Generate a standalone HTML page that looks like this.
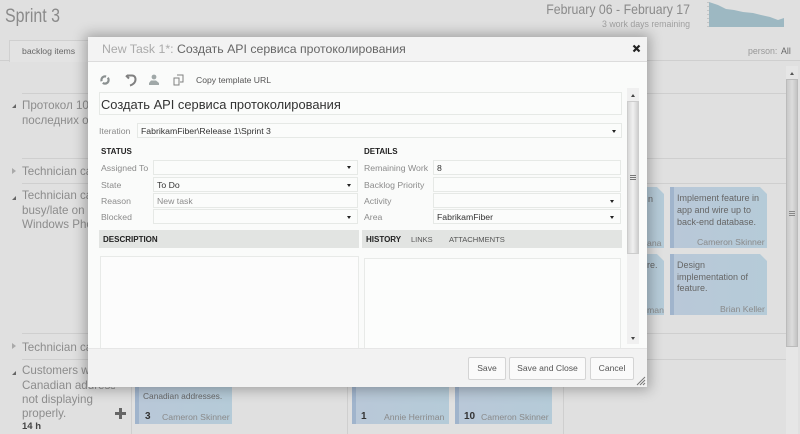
<!DOCTYPE html>
<html>
<head>
<meta charset="utf-8">
<style>
html,body{margin:0;padding:0;width:800px;height:434px;overflow:hidden;background:#e0e0e0}
body{font-family:"Liberation Sans","DejaVu Sans",sans-serif;position:relative}
div,span{position:absolute;white-space:nowrap;box-sizing:border-box}
#page{left:0;top:0;width:800px;height:434px;filter:blur(.35px);overflow:hidden}
.hl{background:#cfcfcf;height:1px}
.vl{background:#cfcfcf;width:1px}
.bt{color:#8c8c8c;font-size:11.6px;line-height:15px}
.card{background:linear-gradient(90deg,#b9c8d8,#b5cbd8);border-left:4px solid #a0b4cc;width:97px}
.ct{color:#666;font-size:9px;line-height:12px}
.cn{color:#8a8a8a;font-size:8.7px;line-height:12px}
.f{border:1px solid #e6e9e6;background:#fbfcfb;height:15px;font-size:8.7px;line-height:14px;color:#333;padding-left:3px}
.l{font-size:8.7px;line-height:12px;color:#8b8b8b}
.h{font-size:8px;line-height:11px;font-weight:bold;color:#222}
.ar{width:0;height:0;border-left:2.5px solid transparent;border-right:2.5px solid transparent;border-top:3px solid #222}
.btn{border:1px solid #d4d4d4;border-radius:2px;background:#fafafa;height:23px;font-size:8.6px;line-height:21px;color:#555;text-align:center;top:357px}
</style>
</head>
<body>
<div id="page">
  <div style="left:5px;top:3px;font-size:19px;line-height:28px;color:#8a8a8a;transform:scaleX(.84);transform-origin:left">Sprint 3</div>
  <div style="left:446px;top:0;width:244px;text-align:right;font-size:14px;line-height:18px;color:#8a8a8a;transform:scaleX(.88);transform-origin:right">February 06 - February 17</div>
  <div style="left:490px;top:18px;width:200px;text-align:right;font-size:8.8px;line-height:12px;color:#a0a0a0">3 work days remaining</div>
  <svg style="position:absolute;left:706px;top:0" width="82" height="30"><path d="M3 2L12 5L20 9L28 10L37 12L47 13L55 15L64 17L72 20L78 18L78 27L3 27Z" fill="#9db8c2"/><path d="M2 2V27" stroke="#aaa" stroke-dasharray="1 3"/></svg>

  <div style="left:9px;top:40px;width:90px;height:22px;background:#e3e3e3;border:1px solid #d0d0d0;border-bottom:none"></div>
  <div style="left:22px;top:45px;font-size:8.7px;line-height:12px;color:#666">backlog items</div>
  <div class="hl" style="left:0;top:60px;width:10px"></div>
  <div class="hl" style="left:640px;top:60px;width:160px"></div>
  <div style="left:748px;top:45px;font-size:8.8px;line-height:12px;color:#999">person:</div>
  <div style="left:781px;top:45px;font-size:8.8px;line-height:12px;color:#666">All</div>

  <div class="hl" style="left:22px;top:93px;width:764px"></div>
  <div class="hl" style="left:22px;top:158px;width:764px"></div>
  <div class="hl" style="left:22px;top:183px;width:764px"></div>
  <div class="hl" style="left:22px;top:333px;width:764px"></div>
  <div class="hl" style="left:22px;top:359px;width:764px"></div>
  <div class="vl" style="left:131px;top:359px;height:75px"></div>
  <div class="vl" style="left:347px;top:359px;height:75px"></div>
  <div class="vl" style="left:563px;top:359px;height:75px"></div>

  <div style="left:12px;top:104px;width:0;height:0;border-left:4px solid transparent;border-bottom:4px solid #666"></div>
  <div class="bt" style="left:22px;top:98px">Протокол 10</div>
  <div class="bt" style="left:22px;top:113px">последних ог</div>
  <div style="left:12px;top:168px;width:0;height:0;border-left:4px solid #aaa;border-top:3px solid transparent;border-bottom:3px solid transparent"></div>
  <div class="bt" style="left:22px;top:164px">Technician ca</div>
  <div style="left:12px;top:196px;width:0;height:0;border-left:4px solid transparent;border-bottom:4px solid #666"></div>
  <div class="bt" style="left:22px;top:188px">Technician ca</div>
  <div class="bt" style="left:22px;top:203px">busy/late on</div>
  <div class="bt" style="left:22px;top:217px">Windows Pho</div>
  <div style="left:12px;top:343px;width:0;height:0;border-left:4px solid #aaa;border-top:3px solid transparent;border-bottom:3px solid transparent"></div>
  <div class="bt" style="left:22px;top:340px">Technician ca</div>
  <div style="left:12px;top:371px;width:0;height:0;border-left:4px solid transparent;border-bottom:4px solid #666"></div>
  <div class="bt" style="left:22px;top:363px">Customers wit</div>
  <div class="bt" style="left:22px;top:378px;width:93px;overflow:hidden">Canadian addresses</div>
  <div class="bt" style="left:22px;top:392px">not displaying</div>
  <div class="bt" style="left:22px;top:406px">properly.</div>
  <div style="left:22px;top:420px;font-size:9.5px;line-height:13px;font-weight:bold;color:#444">14 h</div>
  <div style="left:115px;top:412px;width:11px;height:3px;background:#666"></div>
  <div style="left:119px;top:408px;width:3px;height:11px;background:#666"></div>

  <div class="card" style="left:560px;top:187px;height:61px;width:104px;clip-path:polygon(0 0,97px 0,104px 7px,104px 100%,0 100%)"></div>
  <div class="ct" style="left:648px;top:193px">n</div>
  <div class="cn" style="left:647px;top:237px">ana</div>
  <div class="card" style="left:560px;top:254px;height:61px;width:104px;clip-path:polygon(0 0,97px 0,104px 7px,104px 100%,0 100%)"></div>
  <div class="ct" style="left:647px;top:259px">re.</div>
  <div class="cn" style="left:647px;top:304px">man</div>

  <div class="card" style="left:670px;top:187px;height:61px;clip-path:polygon(0 0,90px 0,97px 7px,97px 100%,0 100%)"></div>
  <div class="ct" style="left:677px;top:192px">Implement feature in</div>
  <div class="ct" style="left:677px;top:204px">app and wire up to</div>
  <div class="ct" style="left:677px;top:216px">back-end database.</div>
  <div class="cn" style="left:697px;top:236px">Cameron Skinner</div>
  <div class="card" style="left:670px;top:254px;height:61px;clip-path:polygon(0 0,90px 0,97px 7px,97px 100%,0 100%)"></div>
  <div class="ct" style="left:677px;top:259px">Design</div>
  <div class="ct" style="left:677px;top:271px">implementation of</div>
  <div class="ct" style="left:677px;top:282px">feature.</div>
  <div class="cn" style="left:720px;top:303px">Brian Keller</div>

  <div class="card" style="left:135px;top:380px;height:44px"></div>
  <div class="ct" style="left:143px;top:390px;font-size:8.4px">Canadian addresses.</div>
  <div class="ct" style="left:145px;top:411px;font-weight:bold;color:#333;font-size:10px">3</div>
  <div class="cn" style="left:162px;top:411px">Cameron Skinner</div>
  <div class="card" style="left:352px;top:380px;height:44px"></div>
  <div class="ct" style="left:361px;top:411px;font-weight:bold;color:#333;font-size:10px">1</div>
  <div class="cn" style="left:384px;top:411px">Annie Herriman</div>
  <div class="card" style="left:455px;top:380px;height:44px"></div>
  <div class="ct" style="left:464px;top:411px;font-weight:bold;color:#333;font-size:10px">10</div>
  <div class="cn" style="left:481px;top:411px">Cameron Skinner</div>

  <div style="left:786px;top:66px;width:12px;height:368px;background:#e6e6e6"></div>
  <div style="left:790px;top:72px;width:0;height:0;border-left:2.5px solid transparent;border-right:2.5px solid transparent;border-bottom:3px solid #555"></div>
  <div style="left:786px;top:79px;width:12px;height:268px;background:linear-gradient(90deg,#c9c9c9,#dcdcdc 50%,#c4c4c4);border:1px solid #bbb"></div>
  <div style="left:789px;top:211px;width:6px;height:1px;background:#888;box-shadow:0 2px #888,0 4px #888"></div>

  <!-- modal -->
  <div style="left:88px;top:37px;width:559px;height:350px;background:#fafbfa;box-shadow:0 0 12px 3px rgba(0,0,0,.28)"></div>
  <div style="left:88px;top:37px;width:559px;height:25px;background:#f3f3f3;border-bottom:1px solid #dcdcdc"></div>
  <div style="left:102px;top:40px;font-size:12.3px;line-height:18px;color:#333"><span style="position:static;color:#aaa">New Task 1*: </span><span style="position:static;color:#666">Создать API сервиса протоколирования</span></div>
  <svg style="position:absolute;left:632px;top:44px" width="9" height="9"><path d="M1.5 1.5L7.5 7.5M7.5 1.5L1.5 7.5" stroke="#222" stroke-width="2.2"/></svg>

  <svg style="position:absolute;left:99px;top:73px" width="90" height="14">
    <circle cx="6" cy="7" r="3.6" fill="none" stroke="#8a9090" stroke-width="2.2" stroke-dasharray="8 2"/>
    <path d="M28 2.5H33C36 2.5 36.5 5 36.5 6.5C36.5 10 33 12 31 12.5M27 2.5L30 5.5" fill="none" stroke="#808080" stroke-width="2"/>
    <circle cx="55" cy="4" r="2.4" fill="#a0a8a8"/><path d="M50 12V10L52 7.5H57L60 10V12Z" fill="#a0a8a8"/>
    <rect x="75" y="5" width="5" height="7" fill="none" stroke="#808080"/><path d="M78 2H84V9H81" fill="none" stroke="#808080"/>
  </svg>
  <div style="left:196px;top:74px;font-size:8.6px;line-height:12px;color:#555">Copy template URL</div>

  <div style="left:99px;top:92px;width:523px;height:23px;border:1px solid #e6e9e6;background:#fbfcfb;font-size:12.9px;line-height:23px;color:#333;padding-left:1px">Создать API сервиса протоколирования</div>

  <div class="l" style="left:99px;top:125px">Iteration</div>
  <div class="f" style="left:137px;top:123px;width:485px">FabrikamFiber\Release 1\Sprint 3</div>
  <div class="ar" style="left:612px;top:130px"></div>

  <div class="h" style="left:101px;top:146px">STATUS</div>
  <div class="h" style="left:364px;top:146px">DETAILS</div>

  <div class="l" style="left:101px;top:162px">Assigned To</div>
  <div class="f" style="left:153px;top:160px;width:205px"></div><div class="ar" style="left:347px;top:166px"></div>
  <div class="l" style="left:101px;top:179px">State</div>
  <div class="f" style="left:153px;top:177px;width:205px">To Do</div><div class="ar" style="left:347px;top:184px"></div>
  <div class="l" style="left:101px;top:195px">Reason</div>
  <div class="f" style="left:153px;top:193px;width:205px;color:#8b8b8b">New task</div>
  <div class="l" style="left:101px;top:211px">Blocked</div>
  <div class="f" style="left:153px;top:209px;width:205px"></div><div class="ar" style="left:347px;top:216px"></div>

  <div class="l" style="left:364px;top:162px">Remaining Work</div>
  <div class="f" style="left:433px;top:160px;width:188px">8</div>
  <div class="l" style="left:364px;top:179px">Backlog Priority</div>
  <div class="f" style="left:433px;top:177px;width:188px"></div>
  <div class="l" style="left:364px;top:195px">Activity</div>
  <div class="f" style="left:433px;top:193px;width:188px"></div><div class="ar" style="left:610px;top:200px"></div>
  <div class="l" style="left:364px;top:211px">Area</div>
  <div class="f" style="left:433px;top:209px;width:188px">FabrikamFiber</div><div class="ar" style="left:610px;top:216px"></div>

  <div style="left:99px;top:230px;width:260px;height:18px;background:#e2e4e2"></div>
  <div class="h" style="left:103px;top:234px">DESCRIPTION</div>
  <div style="left:362px;top:230px;width:260px;height:18px;background:#e2e4e2"></div>
  <div class="h" style="left:366px;top:234px">HISTORY</div>
  <div style="left:411px;top:234px;font-size:7.5px;line-height:11px;color:#555">LINKS</div>
  <div style="left:449px;top:234px;font-size:7.6px;line-height:11px;color:#555">ATTACHMENTS</div>

  <div style="left:100px;top:256px;width:259px;height:92px;border:1px solid #e8eae8;border-bottom:none;background:#fcfcfc"></div>
  <div style="left:364px;top:258px;width:257px;height:90px;border:1px solid #e8eae8;border-bottom:none;background:#fcfdfc"></div>

  <div style="left:627px;top:88px;width:12px;height:256px;background:#f0f0f0"></div>
  <div style="left:631px;top:94px;width:0;height:0;border-left:2.5px solid transparent;border-right:2.5px solid transparent;border-bottom:3px solid #444"></div>
  <div style="left:627px;top:101px;width:12px;height:153px;background:linear-gradient(90deg,#d8d8d8,#f0f0f0 50%,#cfcfcf);border:1px solid #ccc"></div>
  <div style="left:630px;top:175px;width:6px;height:1px;background:#777;box-shadow:0 2px #777,0 4px #777"></div>
  <div class="ar" style="left:631px;top:337px;border-top-color:#444"></div>

  <div style="left:88px;top:348px;width:559px;height:39px;background:#f2f2f2;border-top:1px solid #e6e6e6"></div>
  <div class="btn" style="left:468px;width:38px">Save</div>
  <div class="btn" style="left:509px;width:77px">Save and Close</div>
  <div class="btn" style="left:590px;width:44px">Cancel</div>
  <svg style="position:absolute;left:636px;top:376px" width="10" height="10"><path d="M1 9L9 1M4 9L9 4M7 9L9 7" stroke="#777" stroke-width="1"/></svg>
</div>
</body>
</html>
